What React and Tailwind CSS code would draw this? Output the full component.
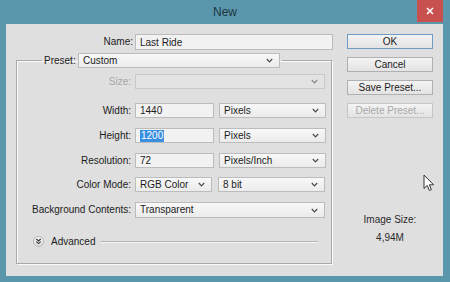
import React from "react";

const Chevron = () => (
  <svg width="7" height="5" viewBox="0 0 7 5" className="shrink-0">
    <path d="M0.8 1L3.5 3.8L6.2 1" stroke="#4a4a4a" strokeWidth="1.2" fill="none" />
  </svg>
);

const Select = ({ className = "", children, disabled }) => (
  <div
    className={
      "h-[15px] flex items-center justify-between pl-[4px] pr-[6px] border border-[#bcbcbc] " +
      (disabled ? "bg-[#e6e6e6] opacity-60 " : "bg-gradient-to-b from-[#f8f8f8] to-[#ebebeb] ") +
      className
    }
  >
    <span className="leading-none">{children}</span>
    <Chevron />
  </div>
);

const Input = ({ className = "", children }) => (
  <div className={"h-[15px] flex items-center pl-[4px] border border-[#bcbcbc] bg-[#f2f2f2] " + className}>
    {children}
  </div>
);

const Row = ({ label, disabled, children }) => (
  <div className="flex items-center gap-[4px]">
    <div className={"w-[114px] text-right leading-none " + (disabled ? "text-[#a6a6a6]" : "")}>{label}</div>
    {children}
  </div>
);

const Button = ({ children, primary, disabled }) => (
  <div
    className={
      "h-[15px] w-[86px] flex items-center justify-center leading-none border bg-gradient-to-b from-[#f4f4f4] to-[#e3e3e3] " +
      (primary ? "border-[#6d9cc6] " : "border-[#b0b0b0] ") +
      (disabled ? "text-[#a8a8a8] border-[#c6c6c6]" : "text-[#1a1a1a]")
    }
  >
    {children}
  </div>
);

export default function App() {
  return (
    <div className="w-[450px] h-[282px] bg-[#5a97ad] flex flex-col font-['Liberation_Sans',Arial,sans-serif] text-[10px] text-[#1c1c1c]">
      <div className="h-[24px] relative flex items-center justify-center">
        <span className="text-[12px] text-[#1f3440] leading-none">New</span>
        <div className="absolute right-[7px] top-0 w-[26px] h-[22px] bg-[#c8504e] flex items-center justify-center">
          <svg width="8" height="8" viewBox="0 0 8 8">
            <path d="M1 1L7 7M7 1L1 7" stroke="#fff" strokeWidth="1.6" />
          </svg>
        </div>
      </div>
      <div className="ml-[6px] mr-[7px] h-[252px] bg-[#dfdfdf] flex relative">
        <div className="w-[341px] pt-[10px] flex flex-col">
          <div className="flex items-center gap-[2px]">
            <div className="w-[127px] text-right leading-none">Name:</div>
            <Input className="w-[198px] h-[16px]">Last Ride</Input>
          </div>
          <fieldset className="mt-[3px] ml-[10px] w-[316px] h-[211px] border border-[#a9a9a9] shadow-[inset_1px_1px_0_#fafafa,1px_1px_0_#fafafa]">
            <legend className="ml-[25px] px-[2px]">
              <div className="flex items-center gap-[2px]">
                <span className="leading-none w-[32px]">Preset:</span>
                <Select className="w-[202px]">Custom</Select>
              </div>
            </legend>
            <div className="flex flex-col mt-[6px]">
              <Row label="Size:" disabled>
                <Select className="w-[190px]" disabled>{""}</Select>
              </Row>
              <div className="mt-[14px]">
                <Row label="Width:">
                  <Input className="w-[79px]">1440</Input>
                  <Select className="w-[107px] ml-[1px]">Pixels</Select>
                </Row>
              </div>
              <div className="mt-[10px]">
                <Row label="Height:">
                  <Input className="w-[79px]">
                    <span className="bg-[#3a8fe0] text-white px-[1px] leading-[12px]">1200</span>
                  </Input>
                  <Select className="w-[107px] ml-[1px]">Pixels</Select>
                </Row>
              </div>
              <div className="mt-[10px]">
                <Row label="Resolution:">
                  <Input className="w-[79px]">72</Input>
                  <Select className="w-[107px] ml-[1px]">Pixels/Inch</Select>
                </Row>
              </div>
              <div className="mt-[9px]">
                <Row label="Color Mode:">
                  <Select className="w-[77px]">RGB Color</Select>
                  <Select className="w-[107px] ml-[2px]">8 bit</Select>
                </Row>
              </div>
              <div className="mt-[10px]">
                <Row label="Background Contents:">
                  <Select className="w-[190px] h-[16px]">Transparent</Select>
                </Row>
              </div>
              <div className="mt-[18px] flex items-center pl-[16px]">
                <div className="w-[11px] h-[11px] rounded-full border border-[#b5b5b5] bg-gradient-to-b from-[#fafafa] to-[#dedede] flex items-center justify-center">
                  <svg width="7" height="7" viewBox="0 0 7 7">
                    <path d="M1.3 1L3.5 3L5.7 1M1.3 3.6L3.5 5.6L5.7 3.6" stroke="#333" strokeWidth="1.1" fill="none" />
                  </svg>
                </div>
                <span className="ml-[7px] leading-none">Advanced</span>
                <div className="ml-[6px] mr-[13px] flex-1 h-[2px] border-t border-[#b2b2b2] border-b-[#f7f7f7] border-b" />
              </div>
            </div>
          </fieldset>
        </div>
        <div className="w-[86px] pt-[10px] flex flex-col gap-[8px]">
          <Button primary>OK</Button>
          <Button>Cancel</Button>
          <Button>Save Preset...</Button>
          <Button disabled>Delete Preset...</Button>
          <div className="mt-[88px] flex flex-col items-center text-[#2a2a2a]">
            <span className="leading-[12px]">Image Size:</span>
            <span className="leading-[12px] mt-[6px]">4,94M</span>
          </div>
        </div>
        <svg className="absolute left-[417px] top-[150px]" width="12" height="18" viewBox="0 0 12 18">
          <path d="M1 1V14.5L4.2 11.5L6.4 16.5L8.4 15.6L6.3 10.8H10.6Z" fill="#fff" stroke="#333" strokeWidth="1" strokeLinejoin="round" />
        </svg>
      </div>
    </div>
  );
}
